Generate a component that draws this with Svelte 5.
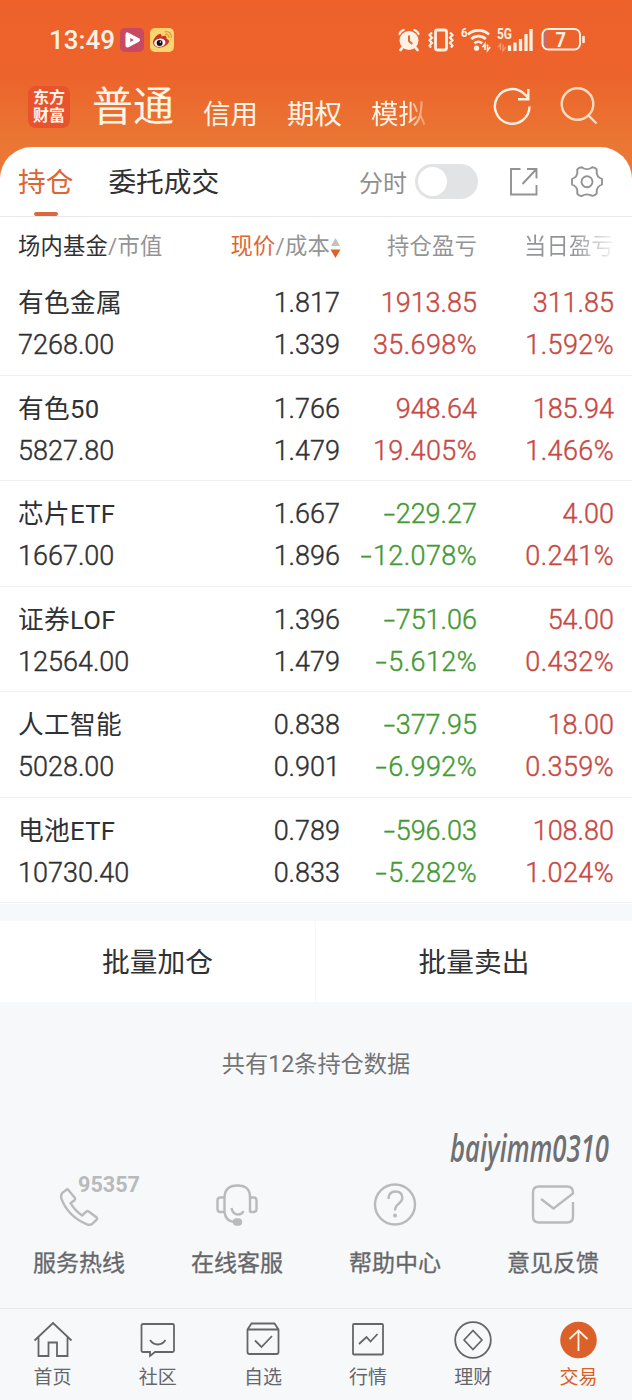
<script>
  const holdings = [
    { name: '有色金属', value: '7268.00', price: '1.817', cost: '1.339', pl: '1913.85', plPct: '35.698%', day: '311.85', dayPct: '1.592%' },
    { name: '有色50', value: '5827.80', price: '1.766', cost: '1.479', pl: '948.64', plPct: '19.405%', day: '185.94', dayPct: '1.466%' },
    { name: '芯片ETF', value: '1667.00', price: '1.667', cost: '1.896', pl: '-229.27', plPct: '-12.078%', day: '4.00', dayPct: '0.241%' },
    { name: '证券LOF', value: '12564.00', price: '1.396', cost: '1.479', pl: '-751.06', plPct: '-5.612%', day: '54.00', dayPct: '0.432%' },
    { name: '人工智能', value: '5028.00', price: '0.838', cost: '0.901', pl: '-377.95', plPct: '-6.992%', day: '18.00', dayPct: '0.359%' },
    { name: '电池ETF', value: '10730.40', price: '0.789', cost: '0.833', pl: '-596.03', plPct: '-5.282%', day: '108.80', dayPct: '1.024%' }
  ];
</script>

{#snippet amount(text)}
  <span class:pct={text.endsWith('%')}>{#if text.startsWith('-')}<i class="minus">-</i>{text.slice(1)}{:else}{text}{/if}</span>
{/snippet}

<div class="page">
  <header>
    <div class="status">
      <span class="time">13:49</span>
      <svg class="app" width="24" height="24" viewBox="0 0 24 24">
        <rect width="24" height="24" rx="5" fill="#c74963" />
        <path d="M7.500 6.400v11.200L18 12z" fill="#fff" stroke="#fff" stroke-width="4" stroke-linejoin="round" />
        <path d="M10.300 10v4l3.600-2z" fill="#c74963" />
      </svg>
      <svg width="24" height="24" viewBox="0 0 24 24">
        <rect width="24" height="24" rx="5" fill="#fbd670" />
        <path d="M3 14.600C3 10.800 8 5.200 10.800 6.200c1 .4.800 1.500.6 2.200 2.400-1 5.300-1.200 5.200 1.500 0 .7-.2.9.4 1.200 5.500 2-1.200 8.600-7.700 8.600C6 19.700 3 17.600 3 14.600z" fill="#c8342a" />
        <ellipse cx="9.800" cy="14.700" rx="5.700" ry="4.100" fill="#fff" transform="rotate(-8 9.800 14.700)" />
        <circle cx="9.600" cy="14.900" r="3" fill="#171312" />
        <circle cx="10.400" cy="14" r=".8" fill="#fff" />
        <path d="M15.300 3.800c3.700-.8 6.700 2 5.900 5.900M15.700 6.300c2-.3 3.400 1 3 3" fill="none" stroke="#df9c3b" stroke-width="1.300" stroke-linecap="round" />
      </svg>
      <svg class="sys" width="190" height="28" viewBox="396 26 190 28" fill="none" stroke="#fff1e4">
        <circle cx="409" cy="40.500" r="9.500" fill="#fff1e4" stroke="none" />
        <path d="M399.500 34c.6-2 2.200-3.500 4.200-4M418.500 34c-.6-2-2.200-3.500-4.200-4" stroke-width="2.200" stroke-linecap="round" />
        <path d="M402.500 47.500l-2 2.500M415.500 47.500l2 2.500" stroke-width="2.800" stroke-linecap="round" />
        <path d="M409 35.500v5.500l3.300 3" stroke="#ed632b" stroke-width="2" />
        <rect x="435.500" y="30" width="11" height="20" rx="2" stroke-width="2.800" />
        <path d="M432 32.500l-2.500 2.600 2.500 2.600-2.500 2.600 2.500 2.600-2.500 2.600 1.500 2.200M450 32.500l2.500 2.600-2.500 2.600 2.500 2.600-2.500 2.600 2.500 2.600-1.500 2.200" stroke-width="2.200" />
        <path d="M468 34.500a15.500 15.500 0 0 1 21 0M471.300 39a10.600 10.600 0 0 1 14.500 0M474.500 43.200a5.800 5.800 0 0 1 7.600 0" stroke-width="2.700" />
        <circle cx="476.500" cy="48.200" r="2.600" fill="#fff1e4" stroke="none" />
        <path d="M485 50v-6l-2.500 3.300M487.500 44.500v6l2.800-3.500" stroke-width="1.600" />
        <path d="M500.500 50v-6l-2.500 3.300M503 44.500v6l2.800-3.500" stroke-width="1.400" opacity=".4" />
        <path d="M509.500 51v-5.500M515 51v-8.500M520.500 51V39M526 51V34M531 51V29" stroke-width="3.300" />
        <path d="M543 43v-7q0-5 5-5v18q-5 0-5-6z" fill="#cb6a63" stroke="none" />
        <rect x="542.500" y="29" width="37.500" height="20.500" rx="5.500" stroke-width="2" />
        <path d="M583.500 37v5" stroke-width="2.600" stroke-linecap="round" />
        <g fill="#fff1e4" stroke="none" font-family="Roboto" font-weight="700">
          <text x="461" y="37" font-size="13" textLength="6.500" lengthAdjust="spacingAndGlyphs">6</text>
          <text x="497" y="38.800" font-size="14" textLength="15" lengthAdjust="spacingAndGlyphs">5G</text>
          <text x="555.500" y="46.900" font-size="20" textLength="10.500" lengthAdjust="spacingAndGlyphs">7</text>
        </g>
      </svg>
    </div>
    <div class="accounts">
      <div class="logo"><span>东方</span><span>财富</span></div>
      <b>普通</b>
      <span class="acct">信用</span>
      <span class="acct">期权</span>
      <span class="acct faded">模拟</span>
      <svg class="tools" width="112" height="44" viewBox="490 86 112 44" fill="none" stroke="#fff0e2" stroke-width="2.400">
        <path d="M529.500 107.500A17.300 17.300 0 1 1 524.500 95.200l3.700 3.500" />
        <path d="M528.300 90v10.300H518" />
        <circle cx="577.500" cy="105" r="15.800" stroke="#ffdcc0" />
        <path d="M588.500 116.500l8 8" stroke="#ffdcc0" />
      </svg>
    </div>
  </header>

  <main>
    <div class="tabs">
      <span class="tab active">持仓</span>
      <span class="tab">委托成交</span>
      <span class="chart">分时</span>
      <span class="switch"></span>
      <svg class="share" width="30" height="30" viewBox="0 0 30 30" fill="none" stroke="#929292" stroke-width="1.900">
        <path d="M11.500 2H2v25.500h25.500V18M18 2h9.500v9.500M27 2.500L13.500 17" />
      </svg>
      <svg width="34" height="34" viewBox="0 0 34 34" fill="none" stroke="#929292" stroke-width="1.900">
        <path stroke-linejoin="round" d="M11.500 2.200L14 3.500q3 1.300 6 0L22.500 2.200q2.500.2 4.200 2.200v3.800q.7 3.500 3.300 4.800l2 1v5.500l-2 1q-2.600 1.300-3.300 4.800v3.400q-1.700 2-4.200 2.200L20 30q-3-1.300-6 0l-2.500 1.100q-2.500-.2-4.200-2.200v-3.600Q6.600 21.800 4 20.500l-2-1V14l2-1q2.600-1.300 3.300-4.800V4.400q1.700-2 4.200-2.200z" />
        <circle cx="17" cy="16.800" r="5.500" />
      </svg>
    </div>

    <div class="grid head">
      <span class="left"><em>场内基金</em>/市值</span>
      <span class="sorted"><em>现价</em>/成本<svg width="11" height="22" viewBox="0 0 11 22"><path d="M5.500 1l4.500 8H1z" fill="#c2c3c5" /><path d="M5.500 21L10.500 12.500H.5z" fill="#e06128" /></svg></span>
      <span>持仓盈亏</span>
      <span class="cut">当日盈亏</span>
    </div>

    {#each holdings as h}
      <div class="grid row">
        <div class="left"><span class="name">{h.name}</span><span>{h.value}</span></div>
        <div><span>{h.price}</span><span>{h.cost}</span></div>
        <div class={h.pl.startsWith('-') ? 'down' : 'up'}>{@render amount(h.pl)}{@render amount(h.plPct)}</div>
        <div class="up">{@render amount(h.day)}{@render amount(h.dayPct)}</div>
      </div>
    {/each}
  </main>

  <div class="batch"><span>批量加仓</span><span>批量卖出</span></div>
  <p class="count">共有12条持仓数据</p>

  <div class="services">
    <svg class="user" width="168" height="56" viewBox="0 0 168 56">
      <text x="2" y="37" font-family="Open Sans" font-style="italic" font-weight="600" font-size="37" textLength="159" lengthAdjust="spacingAndGlyphs" fill="#6f7072">baiyimm0310</text>
    </svg>
    <div>
      <svg width="132" height="54" viewBox="13 1174 132 54" fill="none" stroke="#b9babc" stroke-width="2.400" stroke-linejoin="round">
        <path d="M67.500 1189l7.500 9q.5 1.200-.5 2.200l-4 3q4.500 7.500 11.500 12.300l4.500-4q1-.8 2.200 0l8 6q1 1 0 2.200l-4.200 4q-2.500 1.800-5.500.7-19-8-25.500-25.500-1.200-3.500.8-6z" />
        <text x="78" y="1192.300" font-family="Roboto" font-weight="700" font-size="22.500" textLength="62" lengthAdjust="spacingAndGlyphs" fill="#b9babc" stroke="none">95357</text>
      </svg>
      <span>服务热线</span>
    </div>
    <div>
      <svg width="50" height="54" viewBox="212 1174 50 54" fill="none" stroke="#b9babc" stroke-width="2.400">
        <path d="M224.500 1213v-15q0-12.500 13-12.500t12.500 12.500v14.500M224.500 1212q1 9.500 10 10" />
        <path d="M224.500 1197.500h-4q-3 0-3 3v8.500q0 3 3 3h4M250 1197.500h3.500q3 0 3 3v8.500q0 3-3 3H250M231.500 1208q1.500 6.500 6.500 6.500 4 0 5.500-3.500" />
        <rect x="234" y="1219.500" width="7" height="5" rx="2.500" fill="#b9babc" />
      </svg>
      <span>在线客服</span>
    </div>
    <div>
      <svg width="50" height="54" viewBox="370 1174 50 54" fill="none" stroke="#b9babc" stroke-width="2.400">
        <circle cx="395" cy="1204.500" r="20" />
        <path d="M388.500 1199q0-7.500 7-7.500 6.800 0 6.800 6.300 0 3-3.300 5.700-4 3-4 7" />
        <circle cx="395" cy="1215.500" r="2" fill="#b9babc" stroke="none" />
      </svg>
      <span>帮助中心</span>
    </div>
    <div>
      <svg width="50" height="54" viewBox="528 1174 50 54" fill="none" stroke="#b9babc" stroke-width="2.400">
        <path d="M573 1202v14.500q0 6-6 6h-28q-6 0-6-6v-24q0-6 6-6h28q6 0 6 6v1L553.500 1208.500 541 1199" />
      </svg>
      <span>意见反馈</span>
    </div>
  </div>

  <nav>
    <div>
      <svg viewBox="0 0 40 40"><path d="M1.500 20.500L20 3l18.500 17.500M5.500 17v19H15.500V22.500h8.500V36h10.500V17" /></svg>
      <span>首页</span>
    </div>
    <div>
      <svg viewBox="0 0 40 40"><path d="M5 4h29.500q1.500 0 1.500 1.500v25q0 1.500-1.500 1.500H17l-5 4v-4H5q-1.500 0-1.500-1.500v-25Q3.500 4 5 4zM12 20q3 4.500 7.800 4.500T27.500 20" /></svg>
      <span>社区</span>
    </div>
    <div>
      <svg viewBox="0 0 40 40"><path d="M4.500 9.500l4-6h23l4 6v22.500q0 2-2 2h-27q-2 0-2-2zM4.500 9.500h31M12 20.500l6.500 6.500L29 16" /></svg>
      <span>自选</span>
    </div>
    <div>
      <svg viewBox="0 0 40 40"><rect x="5" y="4" width="30" height="30.500" rx="1" /><path d="M11 24l7.500-7 4 4.500L29.500 14" /></svg>
      <span>行情</span>
    </div>
    <div>
      <svg viewBox="0 0 40 40"><circle cx="20" cy="20" r="17.800" /><path d="M20 10.500l9 9.500-9 9.500-9-9.500z" stroke-linejoin="round" /></svg>
      <span>理财</span>
    </div>
    <div class="on">
      <svg viewBox="0 0 40 40"><circle cx="20.500" cy="20" r="18.300" fill="#db6029" stroke="none" /><path d="M20.500 31V11M11.500 19l9-8.500 9 8.500" stroke="#fff4e8" /></svg>
      <span>交易</span>
    </div>
  </nav>
</div>

<style>
  :global(body) { margin: 0; }
  .page {
    width: 632px; height: 1400px; overflow: hidden; display: flex; flex-direction: column;
    background: #f7f8fa; color: #303133; font-family: Roboto, "Noto Sans CJK SC", sans-serif; white-space: nowrap;
  }
  .page * { box-sizing: border-box; }
  svg { display: block; flex: none; overflow: visible; }
  header {
    height: 187px; margin-bottom: -40px; flex: none;
    background: linear-gradient(#ee622a 0, #ec632b 74px, #ea7834 147px);
  }
  .status { height: 80px; display: flex; align-items: center; padding: 0 46px 0 49px; }
  .time { font-size: 26px; font-weight: 500; color: #fff1e4; width: 71px; }
  .app { margin-right: 6px; }
  .sys { margin-left: auto; }
  .accounts { height: 54px; display: flex; align-items: center; padding: 0 30px 0 28px; color: #fff5e7; }
  .logo {
    width: 42px; height: 42px; border-radius: 8px; background: #e9522d; display: flex; flex-direction: column;
    align-items: center; justify-content: center; font-size: 16px; line-height: 18px; font-weight: 700;
  }
  .accounts b { font-size: 41px; font-weight: 400; line-height: 54px; margin: 0 29px 0 22px; }
  .acct { font-size: 27.500px; line-height: 54px; margin: 15px 29px 0 0; }
  .faded { background: linear-gradient(90deg, #fff5e7 65%, #fff5e744); background-clip: text; color: transparent; }
  .tools { margin-left: auto; }

  main { flex: none; height: 757px; background: #fff; border-radius: 32px 32px 0 0; position: relative; }
  .tabs { height: 70px; display: flex; align-items: center; padding: 0 28px 0 18px; border-bottom: 1px solid #e8e9eb; }
  .tab { font-size: 27.700px; line-height: 72px; height: 69px; margin-right: 35px; }
  .active { color: #dc6734; display: flex; flex-direction: column; align-items: center; }
  .active::after { content: ""; width: 24px; height: 4px; border-radius: 2px; background: #d9683b; margin-top: -7px; flex: none; }
  .chart { margin-left: auto; font-size: 24px; color: #8e8f91; margin-right: 8px; }
  .switch { width: 63px; height: 35px; border-radius: 18px; background: #e2e3e5; padding: 3px; margin-right: 31px; }
  .switch::before { content: ""; display: block; width: 29px; height: 29px; border-radius: 50%; background: #fff; }
  .share { margin-right: 31px; }

  .grid { display: grid; grid-template-columns: 200px 122px 137px 137px; padding: 0 18px; text-align: right; }
  .left { text-align: left; }
  .head { height: 53px; line-height: 59px; font-size: 22.300px; letter-spacing: .2px; color: #939496; }
  .head em { font-style: normal; color: #303133; }
  .sorted { display: flex; justify-content: flex-end; align-items: center; margin-right: -1px; }
  .sorted svg { margin-top: 3px; }
  .head .sorted em { color: #dc6734; }
  .cut { background: linear-gradient(90deg, #939496 70%, #93949618); background-clip: text; color: transparent; }
  .row {
    height: 105.500px; padding-top: 12px; border-bottom: 1px solid #f0f1f3; font-size: 27px; font-weight: 300; line-height: 42px;
    -webkit-text-stroke: .4px currentColor;
  }
  .row div { display: flex; flex-direction: column; }
  .name { font-size: 25.700px; font-weight: 400; letter-spacing: .3px; -webkit-text-stroke: 0; }
  .pct { letter-spacing: .4px; }
  .minus { display: inline-block; font-style: normal; width: 13px; text-align: center; transform: scaleX(1.500); }
  .up { color: #c74943; }
  .down { color: #449a35; }

  .batch { height: 81px; margin-top: 17px; flex: none; background: #fff; display: flex; font-size: 27.700px; line-height: 84px; text-align: center; }
  .batch span { flex: 1; }
  .batch span:first-child { flex: 0 0 315px; }
  .batch span + span { border-left: 1px solid #f7f8fa; }
  .count { margin: 45px 0 0; height: 34px; line-height: 34px; text-align: center; font-size: 23.200px; color: #727375; flex: none; }

  .services { position: relative; display: grid; grid-template-columns: repeat(4, 1fr); margin-top: 93px; height: 134px; flex: none; }
  .services div { display: flex; flex-direction: column; align-items: center; font-size: 23px; color: #66676a; }
  .services div span { line-height: 34px; margin-top: 19px; -webkit-text-stroke: .3px currentColor; }
  .user { position: absolute; right: 16px; top: -49px; }

  nav { flex: 1; border-top: 1px solid #e8e9eb; display: grid; grid-template-columns: repeat(6, 1fr); padding: 11px 1px 0 0; }
  nav div { display: flex; flex-direction: column; align-items: center; font-size: 19px; color: #65666a; }
  nav svg { width: 40px; height: 40px; fill: none; stroke: #65666a; stroke-width: 1.800; }
  nav span { line-height: 28px; margin-top: 4px; }
  nav .on { color: #dc6128; }
</style>
